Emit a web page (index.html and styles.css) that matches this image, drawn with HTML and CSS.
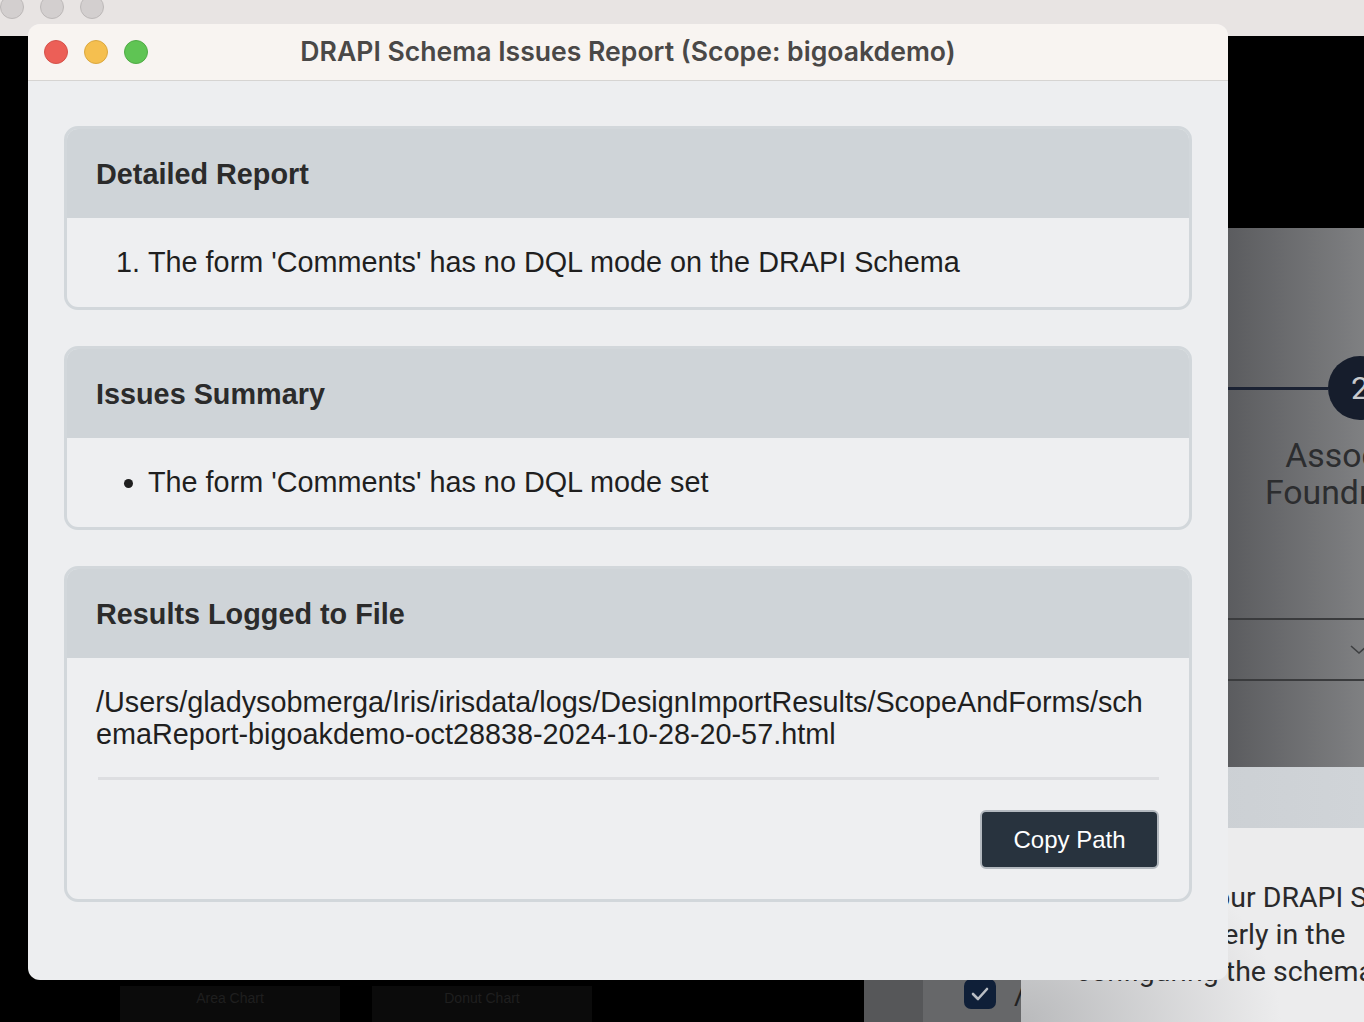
FILE: index.html
```html
<!DOCTYPE html>
<html lang="en">
<head>
    <meta charset="UTF-8">
    <meta name="viewport" content="width=device-width, initial-scale=1.0">
    <title>DRAPI Schema Issues Report</title>
    <link rel="stylesheet" href="styles.css">
</head>
<body>
    <div class="desktop">
        <div class="menubar">
            <span class="ghost-dot"></span>
            <span class="ghost-dot"></span>
            <span class="ghost-dot"></span>
        </div>

        <div class="app-panel">
            <div class="stepper">
                <div class="step-line"></div>
                <div class="step-num">2</div>
            </div>
            <div class="step-label">Associate<br>Foundry App</div>
            <div class="select-row">
                <svg class="chevron" width="18" height="10" viewBox="0 0 18 10"><path d="M1 1l8 7 8-7" fill="none" stroke="#3e3f41" stroke-width="1.6"/></svg>
            </div>
            <div class="check-row">
                <span class="check-box">
                    <svg width="20" height="16" viewBox="0 0 20 16"><path d="M3 8l5 5 9-10" fill="none" stroke="#b9bdc3" stroke-width="2.6" stroke-linecap="round" stroke-linejoin="round"/></svg>
                </span>
                <span class="check-text">/</span>
            </div>
        </div>

        <div class="back-modal">
            <div class="back-modal-head"></div>
            <p class="back-modal-text">
                <span class="bm-line">Make sure your DRAPI Schema</span>
                <span class="bm-line bm-line-2">is set up properly in the</span>
                <span class="bm-line bm-line-3">configuring the schema</span>
            </p>
        </div>

        <div class="chart-cards">
            <div class="chart-card">Area Chart</div>
            <div class="chart-card">Donut Chart</div>
        </div>
    </div>

    <div class="window">
        <div class="titlebar">
            <div class="lights">
                <span class="light red"></span>
                <span class="light yellow"></span>
                <span class="light green"></span>
            </div>
            <div class="title">DRAPI Schema Issues Report (Scope: bigoakdemo)</div>
        </div>

        <div class="window-body">
            <div class="card">
                <h2 class="card-head">Detailed Report</h2>
                <div class="card-body">
                    <ol class="issue-list">
                        <li>The form 'Comments' has no DQL mode on the DRAPI Schema</li>
                    </ol>
                </div>
            </div>

            <div class="card">
                <h2 class="card-head">Issues Summary</h2>
                <div class="card-body">
                    <ul class="issue-list">
                        <li>The form 'Comments' has no DQL mode set</li>
                    </ul>
                </div>
            </div>

            <div class="card">
                <h2 class="card-head">Results Logged to File</h2>
                <div class="card-body file-body">
                    <p class="path">/Users/gladysobmerga/Iris/irisdata/logs/DesignImportResults/ScopeAndForms/schemaReport-bigoakdemo-oct28838-2024-10-28-20-57.html</p>
                    <hr class="divider">
                    <div class="actions">
                        <button class="copy-btn">Copy Path</button>
                    </div>
                </div>
            </div>
        </div>
    </div>
</body>
</html>
```

FILE: styles.css
```css
*{
    margin: 0;
    padding: 0;
    box-sizing: border-box;
}
body{
    width: 1364px;
    height: 1022px;
    overflow: hidden;
    position: relative;
    background-color: #000;
    font-family: "Liberation Sans", Arial, sans-serif;
}

/* ---- stuff behind the dialog ---- */
.desktop{
    position: absolute;
    inset: 0;
    overflow: hidden;
}
.menubar{
    height: 36px;
    background-color: #e8e4e3;
    display: flex;
    gap: 16px;
}
.ghost-dot{
    width: 24px;
    height: 24px;
    margin-top: -5px;
    border-radius: 50%;
    background-color: #d3cfcf;
    border: 1px solid #bcb8b8;
}
.app-panel{
    position: absolute;
    left: 864px;
    top: 228px;
    right: 0;
    bottom: 0;
    padding-top: 128px;
    background: linear-gradient(90deg, #565759 0, #565759 59px, #666769 59px, #666769 364px, #5b5c5f 364px, #7f8082 100%);
}
.stepper{
    display: flex;
    align-items: center;
    margin-left: 300px;
}
.step-line{
    flex: none;
    width: 164px;
    height: 3px;
    background-color: #1b2233;
}
.step-num{
    flex: none;
    width: 64px;
    height: 64px;
    border-radius: 50%;
    background-color: #161d2c;
    color: #c9cacc;
    font: 32px Roboto, sans-serif;
    line-height: 64px;
    text-align: center;
}
.step-label{
    width: 240px;
    margin: 17px 0 0 376px;
    font: 33.8px Roboto, sans-serif;
    line-height: 37px;
    text-align: center;
    white-space: nowrap;
    color: #2c2d2f;
}
.select-row{
    margin-top: 107px;
    height: 63px;
    border-top: 2px solid #3a3b3d;
    border-bottom: 2px solid #3a3b3d;
    display: flex;
    justify-content: flex-end;
    align-items: center;
}
.chevron{
    margin-right: -4px;
}
.check-row{
    margin: 295px 0 0 100px;
    display: flex;
    align-items: center;
    gap: 18px;
}
.check-box{
    width: 32px;
    height: 30px;
    border-radius: 7px;
    background-color: #0f1f38;
    display: flex;
    align-items: center;
    justify-content: center;
}
.check-text{
    font: 30px Roboto, sans-serif;
    color: #222;
}
.back-modal{
    position: absolute;
    left: 1021px;
    top: 767px;
    right: 0;
    bottom: 0;
    background: radial-gradient(ellipse 260px 200px at 0 100%, #b9babc, #ececed 100%);
}
.back-modal-head{
    height: 61px;
    background: linear-gradient(90deg, #c7cbcf, #d0d4d8);
}
.back-modal-text{
    padding-top: 51px;
    white-space: nowrap;
    font: 28.5px Roboto, sans-serif;
    line-height: 37px;
    color: #2a2a2b;
}
.bm-line{
    display: block;
    padding-left: 41px;
}
.bm-line-2{
    padding-left: 31px;
}
.bm-line-3{
    padding-left: 55px;
}
.chart-cards{
    position: absolute;
    left: 120px;
    top: 986px;
    display: flex;
    gap: 32px;
}
.chart-card{
    width: 220px;
    height: 60px;
    padding-top: 4px;
    background-color: #0b0b0b;
    color: #1f1f1f;
    font-size: 14px;
    text-align: center;
}

/* ---- dialog ---- */
.window{
    position: absolute;
    left: 28px;
    top: 24px;
    width: 1200px;
    height: 956px;
    border-radius: 12px;
    overflow: hidden;
    background-color: #edeef0;
    z-index: 2;
}
.titlebar{
    height: 57px;
    background-color: #f8f4f1;
    border-bottom: 1px solid #d6d4d2;
    display: grid;
    grid-template-columns: 1fr auto 1fr;
    align-items: center;
}
.lights{
    display: flex;
    gap: 16px;
    padding-left: 16px;
}
.light{
    width: 24px;
    height: 24px;
    border-radius: 50%;
}
.red{
    background-color: #ec5f57;
    border: 1px solid #d5524b;
}
.yellow{
    background-color: #f5bf4f;
    border: 1px solid #dba840;
}
.green{
    background-color: #5fc454;
    border: 1px solid #50ab46;
}
.title{
    font: 600 26.6px Inter, "Noto Sans", sans-serif;
    color: #4a4847;
    white-space: nowrap;
    padding-bottom: 2px;
}
.window-body{
    padding: 45px 36px 0;
    display: flex;
    flex-direction: column;
    gap: 36px;
}
.card{
    border: 3px solid #d2d7db;
    border-radius: 14px;
    overflow: hidden;
    background-color: #eeeff1;
}
.card-head{
    height: 89px;
    padding: 2px 29px 0;
    display: flex;
    align-items: center;
    background-color: #cfd4d8;
    font-size: 28.8px;
    font-weight: bold;
    color: #2b2b2b;
}
.card-body{
    padding: 28px 29px;
    font-size: 28.8px;
    line-height: 33px;
    color: #1f1f1f;
}
.issue-list{
    padding-left: 52px;
}
.file-body{
    padding: 28px 30px 30px 29px;
}
.path{
    max-width: 1056px;
    line-height: 32px;
    word-break: break-all;
}
.divider{
    border: 0;
    height: 3px;
    margin: 27px 0 0 2px;
    background-color: #dddee1;
}
.actions{
    margin-top: 30px;
    display: flex;
    justify-content: flex-end;
}
.copy-btn{
    width: 179px;
    height: 59px;
    border: 2px solid #b3b9bf;
    border-radius: 6px;
    background-color: #28333e;
    color: #fff;
    font: 24px "Liberation Sans", Arial, sans-serif;
}
```
